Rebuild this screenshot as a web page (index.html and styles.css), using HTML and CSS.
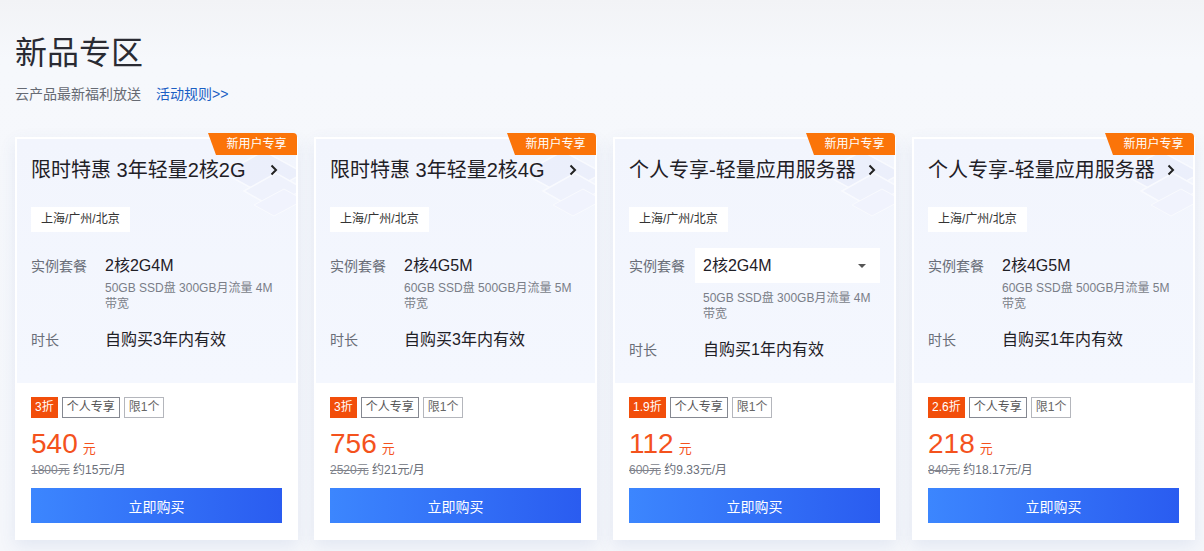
FILE: index.html
```html
<!DOCTYPE html>
<html lang="zh-CN">
<head>
<meta charset="utf-8">
<title>新品专区</title>
<link rel="stylesheet" href="styles.css">
</head>
<body>
<div class="page">
  <header class="head">
    <h1 class="head-title">新品专区</h1>
    <p class="head-sub">云产品最新福利放送<a class="head-link" href="#">活动规则&gt;&gt;</a></p>
  </header>

  <div class="cards">
    <!-- card 1 -->
    <div class="card">
      <span class="badge">新用户专享</span>
      <div class="card-top">
        <svg class="deco" width="90" height="80" viewBox="0 0 90 80"><path d="M10 30 L50 8 L90 30 L50 52 Z" fill="#e6eafb" stroke="#fff" stroke-width="1.5"/><path d="M30 48 L62 30 L90 46 L58 64 Z" fill="#edf0fc" stroke="#fff" stroke-width="1.5"/><path d="M40 62 L70 46 L90 57 L60 73 Z" fill="#f0f2fd" stroke="#fff" stroke-width="1"/></svg>
        <div class="title-row">
          <span class="title">限时特惠 3年轻量2核2G</span>
          <svg class="chev" width="8" height="12" viewBox="0 0 8 12"><path d="M1.5 1.5 L6 6 L1.5 10.5" fill="none" stroke="#222" stroke-width="2"/></svg>
        </div>
        <span class="region">上海/广州/北京</span>
        <div class="spec">
          <span class="label">实例套餐</span>
          <div class="value">2核2G4M</div>
        </div>
        <p class="desc">50GB SSD盘 300GB月流量 4M 带宽</p>
        <div class="spec spec-dur">
          <span class="label">时长</span>
          <div class="value">自购买3年内有效</div>
        </div>
      </div>
      <div class="card-bottom">
        <div class="tags"><span class="tag tag-off">3折</span><span class="tag tag-dark">个人专享</span><span class="tag tag-light">限1个</span></div>
        <div class="price"><span class="num">540</span><span class="unit">元</span></div>
        <div class="old"><s class="orig">1800元</s> 约15元/月</div>
        <button class="buy">立即购买</button>
      </div>
    </div>

    <!-- card 2 -->
    <div class="card">
      <span class="badge">新用户专享</span>
      <div class="card-top">
        <svg class="deco" width="90" height="80" viewBox="0 0 90 80"><path d="M10 30 L50 8 L90 30 L50 52 Z" fill="#e6eafb" stroke="#fff" stroke-width="1.5"/><path d="M30 48 L62 30 L90 46 L58 64 Z" fill="#edf0fc" stroke="#fff" stroke-width="1.5"/><path d="M40 62 L70 46 L90 57 L60 73 Z" fill="#f0f2fd" stroke="#fff" stroke-width="1"/></svg>
        <div class="title-row">
          <span class="title">限时特惠 3年轻量2核4G</span>
          <svg class="chev" width="8" height="12" viewBox="0 0 8 12"><path d="M1.5 1.5 L6 6 L1.5 10.5" fill="none" stroke="#222" stroke-width="2"/></svg>
        </div>
        <span class="region">上海/广州/北京</span>
        <div class="spec">
          <span class="label">实例套餐</span>
          <div class="value">2核4G5M</div>
        </div>
        <p class="desc">60GB SSD盘 500GB月流量 5M 带宽</p>
        <div class="spec spec-dur">
          <span class="label">时长</span>
          <div class="value">自购买3年内有效</div>
        </div>
      </div>
      <div class="card-bottom">
        <div class="tags"><span class="tag tag-off">3折</span><span class="tag tag-dark">个人专享</span><span class="tag tag-light">限1个</span></div>
        <div class="price"><span class="num">756</span><span class="unit">元</span></div>
        <div class="old"><s class="orig">2520元</s> 约21元/月</div>
        <button class="buy">立即购买</button>
      </div>
    </div>

    <!-- card 3 -->
    <div class="card">
      <span class="badge">新用户专享</span>
      <div class="card-top">
        <svg class="deco" width="90" height="80" viewBox="0 0 90 80"><path d="M10 30 L50 8 L90 30 L50 52 Z" fill="#e6eafb" stroke="#fff" stroke-width="1.5"/><path d="M30 48 L62 30 L90 46 L58 64 Z" fill="#edf0fc" stroke="#fff" stroke-width="1.5"/><path d="M40 62 L70 46 L90 57 L60 73 Z" fill="#f0f2fd" stroke="#fff" stroke-width="1"/></svg>
        <div class="title-row">
          <span class="title">个人专享-轻量应用服务器</span>
          <svg class="chev" width="8" height="12" viewBox="0 0 8 12"><path d="M1.5 1.5 L6 6 L1.5 10.5" fill="none" stroke="#222" stroke-width="2"/></svg>
        </div>
        <span class="region">上海/广州/北京</span>
        <div class="spec spec-select">
          <span class="label">实例套餐</span>
          <div class="select">2核2G4M<span class="caret"></span></div>
        </div>
        <p class="desc desc-select">50GB SSD盘 300GB月流量 4M 带宽</p>
        <div class="spec spec-dur">
          <span class="label">时长</span>
          <div class="value">自购买1年内有效</div>
        </div>
      </div>
      <div class="card-bottom">
        <div class="tags"><span class="tag tag-off">1.9折</span><span class="tag tag-dark">个人专享</span><span class="tag tag-light">限1个</span></div>
        <div class="price"><span class="num">112</span><span class="unit">元</span></div>
        <div class="old"><s class="orig">600元</s> 约9.33元/月</div>
        <button class="buy">立即购买</button>
      </div>
    </div>

    <!-- card 4 -->
    <div class="card">
      <span class="badge">新用户专享</span>
      <div class="card-top">
        <svg class="deco" width="90" height="80" viewBox="0 0 90 80"><path d="M10 30 L50 8 L90 30 L50 52 Z" fill="#e6eafb" stroke="#fff" stroke-width="1.5"/><path d="M30 48 L62 30 L90 46 L58 64 Z" fill="#edf0fc" stroke="#fff" stroke-width="1.5"/><path d="M40 62 L70 46 L90 57 L60 73 Z" fill="#f0f2fd" stroke="#fff" stroke-width="1"/></svg>
        <div class="title-row">
          <span class="title">个人专享-轻量应用服务器</span>
          <svg class="chev" width="8" height="12" viewBox="0 0 8 12"><path d="M1.5 1.5 L6 6 L1.5 10.5" fill="none" stroke="#222" stroke-width="2"/></svg>
        </div>
        <span class="region">上海/广州/北京</span>
        <div class="spec">
          <span class="label">实例套餐</span>
          <div class="value">2核4G5M</div>
        </div>
        <p class="desc">60GB SSD盘 500GB月流量 5M 带宽</p>
        <div class="spec spec-dur">
          <span class="label">时长</span>
          <div class="value">自购买1年内有效</div>
        </div>
      </div>
      <div class="card-bottom">
        <div class="tags"><span class="tag tag-off">2.6折</span><span class="tag tag-dark">个人专享</span><span class="tag tag-light">限1个</span></div>
        <div class="price"><span class="num">218</span><span class="unit">元</span></div>
        <div class="old"><s class="orig">840元</s> 约18.17元/月</div>
        <button class="buy">立即购买</button>
      </div>
    </div>
  </div>
</div>
</body>
</html>
```

FILE: styles.css
```css
* { box-sizing: border-box; }
html, body { margin: 0; padding: 0; }
body {
  font-family: "Liberation Sans", "Noto Sans CJK SC", sans-serif;
  background: linear-gradient(180deg, #f2f3f6 0, #f6f8fc 60px, #f5f7fb 100%);
  color: #222;
  height: 551px;
  overflow: hidden;
}
.page { padding: 33px 15px 0 15px; }

.head-title {
  margin: 0;
  font-size: 32px;
  line-height: 40px;
  font-weight: normal;
  color: #2a2b33;
}
.head-sub {
  margin: 11px 0 0 0;
  font-size: 14px;
  line-height: 20px;
  color: #666a73;
}
.head-link {
  margin-left: 15px;
  color: #1a5fc4;
  text-decoration: none;
}

.cards {
  display: flex;
  gap: 16px;
  margin-top: 33px;
}
.card {
  position: relative;
  flex: none;
  width: 283px;
  background: #fff;
  padding: 2px;
  box-shadow: 0 6px 16px rgba(70, 100, 170, 0.10);
}
.badge {
  position: absolute;
  top: -4px;
  right: 1px;
  width: 89px;
  height: 22px;
  line-height: 22px;
  padding-left: 8px;
  text-align: center;
  font-size: 12px;
  color: #fff;
  background: #fb7409;
  border-top-right-radius: 4px;
  clip-path: polygon(0 0, 100% 0, 100% 100%, 8px 100%);
  z-index: 2;
}

.card-top {
  position: relative;
  height: 244px;
  padding: 18px 14px 0 14px;
  background: linear-gradient(180deg, #f2f5fd 0, #f4f7fe 100%);
  overflow: hidden;
}
.deco {
  position: absolute;
  top: 4px;
  right: -8px;
  opacity: 0.5;
}
.title-row {
  position: relative;
  display: flex;
  align-items: center;
  justify-content: space-between;
  height: 26px;
}
.title {
  font-size: 20px;
  line-height: 26px;
  color: #1f2026;
}
.chev { margin-right: 4px; }

.region {
  position: relative;
  display: inline-block;
  margin-top: 24px;
  height: 25px;
  line-height: 25px;
  padding: 0 10px;
  font-size: 12px;
  color: #333;
  background: #fff;
}

.spec {
  display: flex;
  align-items: center;
  margin-top: 23px;
}
.label {
  flex: none;
  width: 66px;
  font-size: 14px;
  line-height: 22px;
  color: #6a6e78;
}
.value {
  padding-left: 8px;
  font-size: 16px;
  line-height: 22px;
  color: #1f2026;
}
.desc {
  margin: 3px 0 0 0;
  padding-left: 74px;
  font-size: 12px;
  line-height: 16px;
  color: #7a7e88;
}
.spec-dur { margin-top: 17px; }

.spec-select { margin-top: 16px; }
.select {
  flex: 1;
  position: relative;
  height: 35px;
  line-height: 35px;
  padding: 0 8px;
  font-size: 16px;
  color: #1f2026;
  background: #fff;
}
.caret {
  position: absolute;
  right: 14px;
  top: 16px;
  width: 0;
  height: 0;
  border-left: 4px solid transparent;
  border-right: 4px solid transparent;
  border-top: 4px solid #555;
}
.desc-select { margin-top: 7px; }

.card-bottom {
  padding: 14px 14px 15px 14px;
}
.tags {
  display: flex;
  gap: 4px;
}
.tag {
  height: 21px;
  line-height: 19px;
  padding: 0 4px;
  font-size: 12px;
  border: 1px solid;
}
.tag-off {
  color: #fff;
  background: #f24e0a;
  border-color: #f24e0a;
  padding: 0 3px;
}
.tag-dark {
  color: #555;
  border-color: #858891;
}
.tag-light {
  color: #666;
  border-color: #b4b6bc;
}
.price {
  margin-top: 9px;
  height: 34px;
  line-height: 34px;
  color: #f4521d;
}
.num { font-size: 28px; }
.unit { font-size: 13px; margin-left: 5px; }
.old {
  height: 18px;
  line-height: 18px;
  font-size: 12px;
  color: #6a6e78;
}
.orig { color: #80838c; }
.buy {
  display: block;
  width: 100%;
  height: 35px;
  margin-top: 9px;
  border: 0;
  padding: 0;
  font-family: inherit;
  font-size: 14px;
  color: #fff;
  background: linear-gradient(90deg, #3c86fe 0, #2a5cf0 100%);
  cursor: pointer;
}
```
